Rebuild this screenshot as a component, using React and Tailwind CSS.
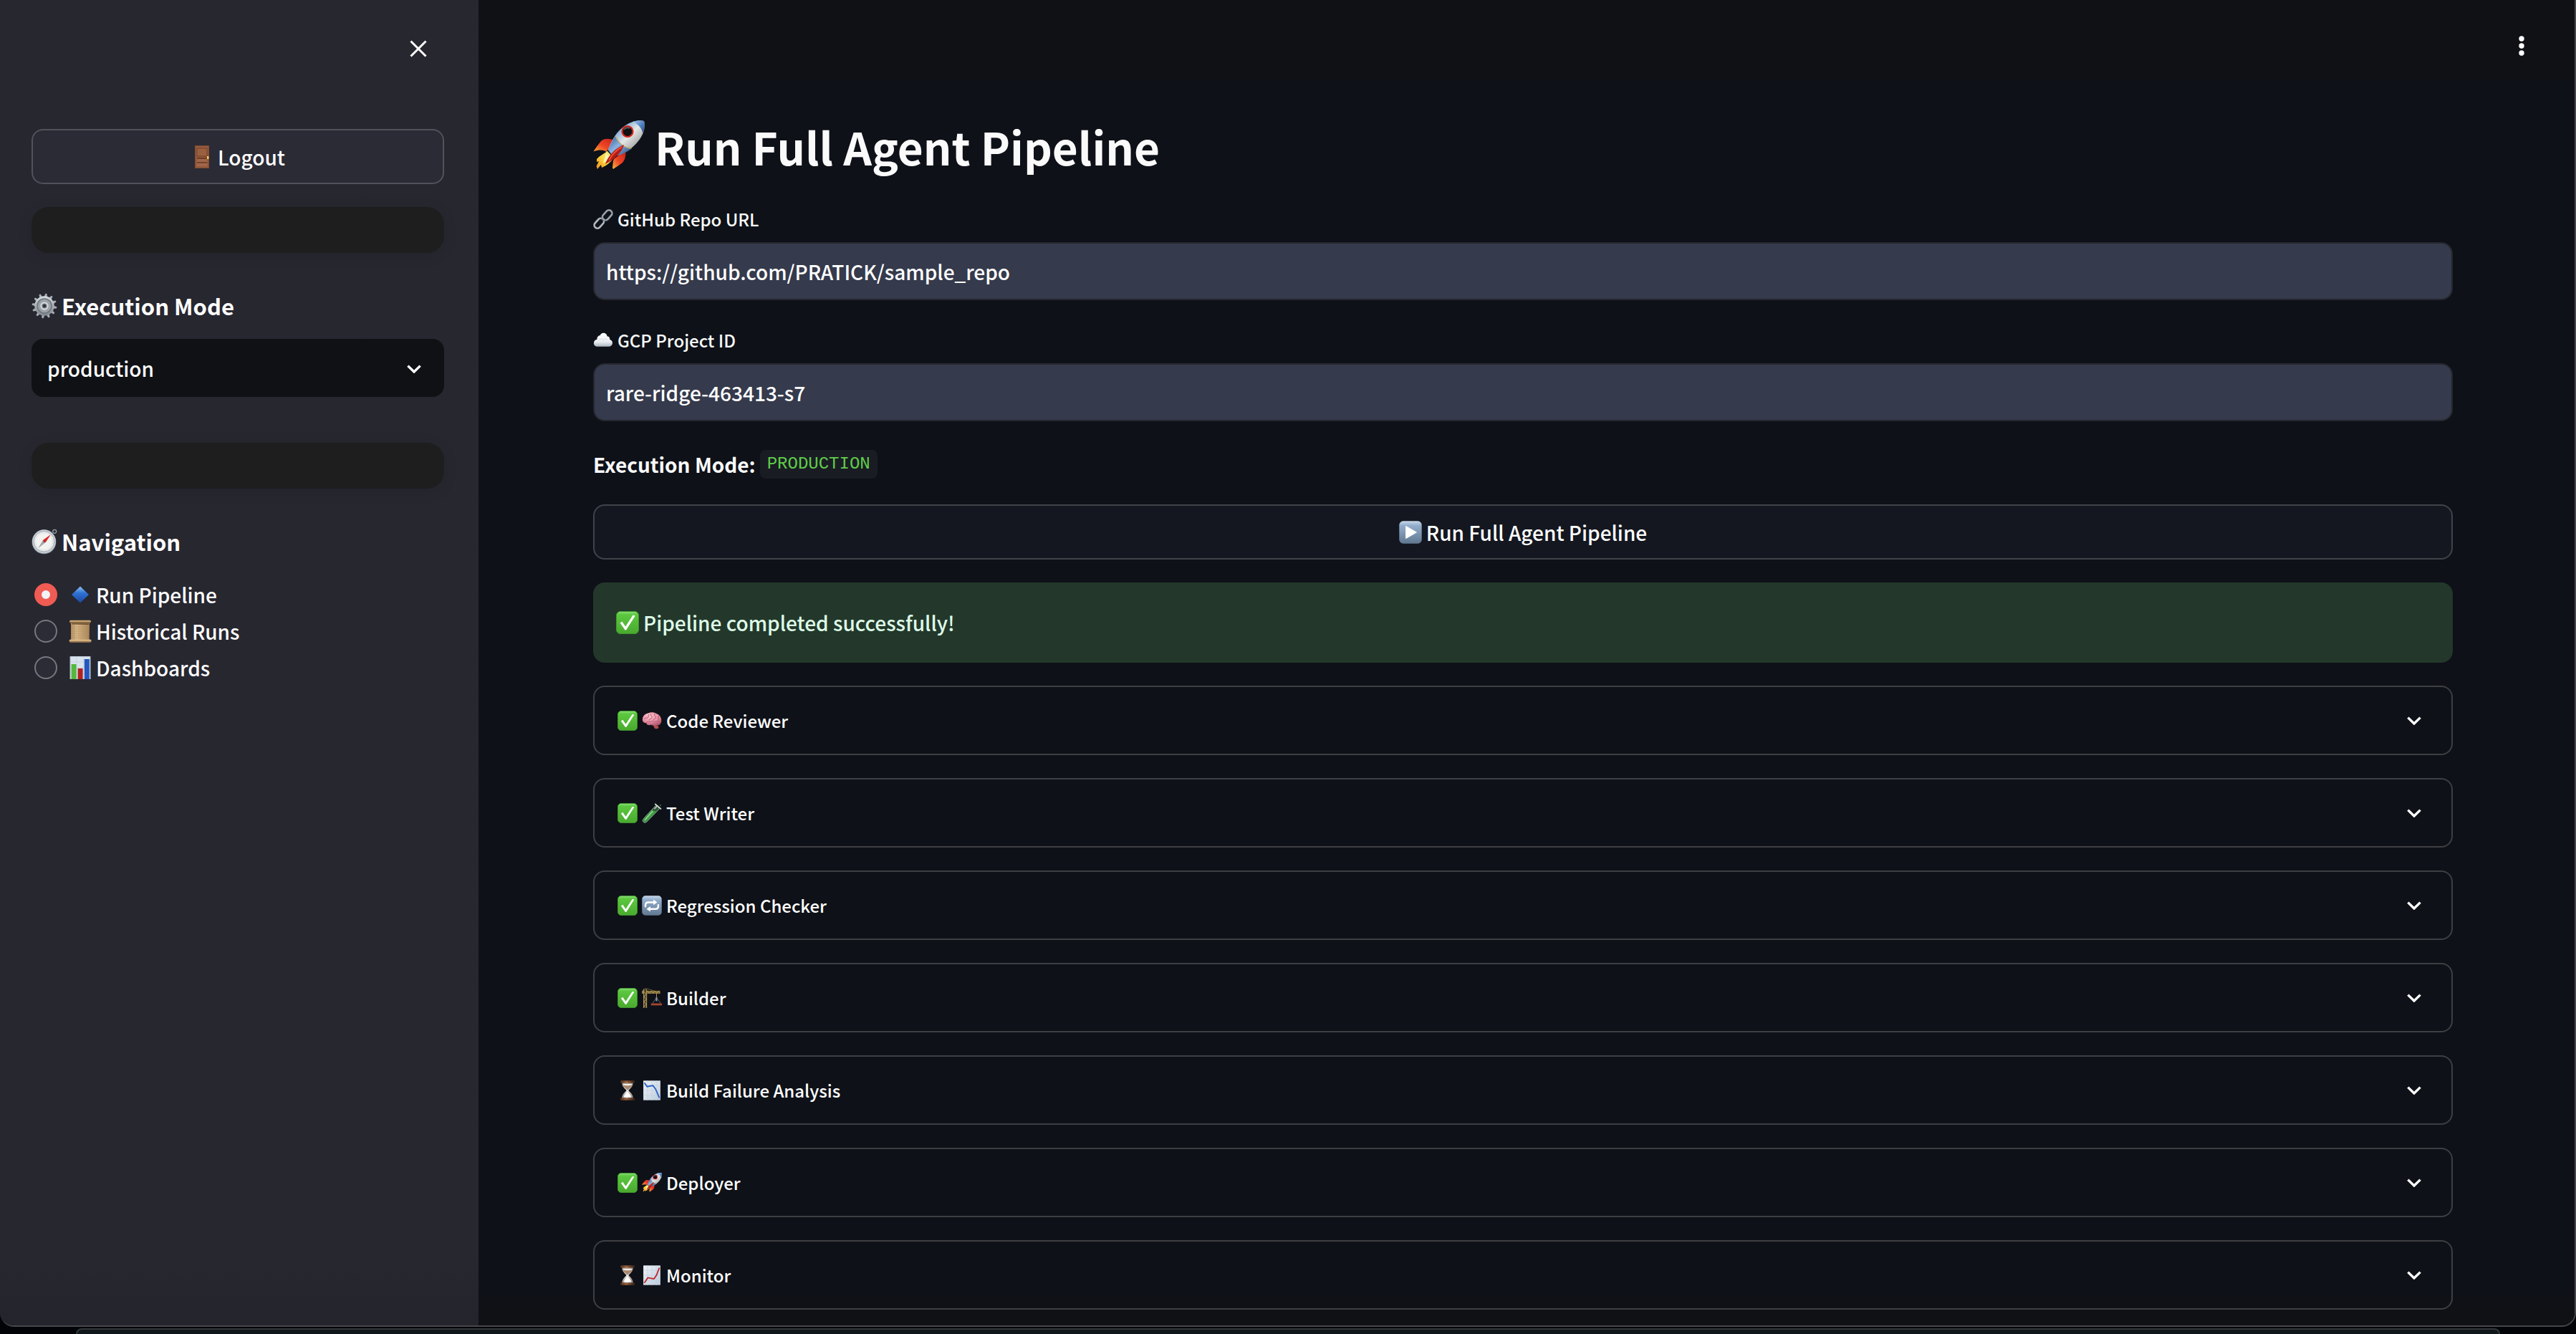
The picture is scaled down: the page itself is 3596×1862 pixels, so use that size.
import React, { useState } from "react";

/* ---------- emoji-style icons ---------- */

function Icon({ className, children, box = "0 0 32 32" }) {
  return (
    <svg viewBox={box} className={`shrink-0 ${className}`} aria-hidden="true">
      {children}
    </svg>
  );
}

function Gradients() {
  return (
    <svg className="absolute h-0 w-0" aria-hidden="true">
      <defs>
        <linearGradient id="gGreen" x1="0" y1="0" x2="0" y2="1">
          <stop offset="0" stopColor="#8fe07f" />
          <stop offset="0.14" stopColor="#5cc83f" />
          <stop offset="1" stopColor="#4aa92f" />
        </linearGradient>
        <linearGradient id="gBlueKey" x1="0" y1="0" x2="0" y2="1">
          <stop offset="0" stopColor="#c9d9ea" />
          <stop offset="0.2" stopColor="#93aecd" />
          <stop offset="1" stopColor="#60778f" />
        </linearGradient>
        <linearGradient id="gBody" x1="0" y1="0" x2="1" y2="1">
          <stop offset="0" stopColor="#3f71b4" />
          <stop offset="0.3" stopColor="#8fb2dd" />
          <stop offset="0.5" stopColor="#e4e7e6" />
          <stop offset="0.75" stopColor="#a3a7a6" />
          <stop offset="1" stopColor="#55595b" />
        </linearGradient>
        <linearGradient id="gBodyLow" x1="0" y1="0" x2="1" y2="1">
          <stop offset="0" stopColor="#2e558f" />
          <stop offset="0.45" stopColor="#8ab2e2" />
          <stop offset="1" stopColor="#234476" />
        </linearGradient>
        <linearGradient id="gFin" x1="1" y1="0" x2="0" y2="1">
          <stop offset="0" stopColor="#c41f17" />
          <stop offset="0.55" stopColor="#ee4526" />
          <stop offset="1" stopColor="#fbb43a" />
        </linearGradient>
        <linearGradient id="gFlame" x1="1" y1="0" x2="0" y2="1">
          <stop offset="0" stopColor="#fff39a" />
          <stop offset="0.55" stopColor="#fcd23c" />
          <stop offset="1" stopColor="#ee8a1f" />
        </linearGradient>
        <linearGradient id="gNose" x1="0" y1="0" x2="1" y2="1">
          <stop offset="0" stopColor="#a8c8ee" />
          <stop offset="0.5" stopColor="#5585c4" />
          <stop offset="1" stopColor="#274a80" />
        </linearGradient>
        <linearGradient id="gDiamond" x1="0" y1="0" x2="0" y2="1">
          <stop offset="0" stopColor="#8fc4f5" />
          <stop offset="0.4" stopColor="#2f72d4" />
          <stop offset="1" stopColor="#1d48a0" />
        </linearGradient>
        <linearGradient id="gPaper" x1="0" y1="0" x2="1" y2="1">
          <stop offset="0" stopColor="#eef3f8" />
          <stop offset="1" stopColor="#bccbdc" />
        </linearGradient>
        <linearGradient id="gScroll" x1="0" y1="0" x2="1" y2="0">
          <stop offset="0" stopColor="#b08a5e" />
          <stop offset="0.3" stopColor="#dab98a" />
          <stop offset="1" stopColor="#a98355" />
        </linearGradient>
        <linearGradient id="gMetal" x1="0" y1="0" x2="0" y2="1">
          <stop offset="0" stopColor="#d5dae0" />
          <stop offset="1" stopColor="#7f858c" />
        </linearGradient>
        <linearGradient id="gCloud" x1="0" y1="0" x2="0" y2="1">
          <stop offset="0" stopColor="#ffffff" />
          <stop offset="0.65" stopColor="#e9edf1" />
          <stop offset="1" stopColor="#aab4c0" />
        </linearGradient>
        <radialGradient id="gBrain" cx="0.4" cy="0.3" r="0.8">
          <stop offset="0" stopColor="#f9c0cd" />
          <stop offset="0.55" stopColor="#e58ea3" />
          <stop offset="1" stopColor="#a94d66" />
        </radialGradient>
        <linearGradient id="gWoodCap" x1="0" y1="0" x2="1" y2="0">
          <stop offset="0" stopColor="#4b2a18" />
          <stop offset="0.4" stopColor="#96603c" />
          <stop offset="1" stopColor="#3a2012" />
        </linearGradient>
        <linearGradient id="gGlass" x1="0" y1="0" x2="1" y2="0">
          <stop offset="0" stopColor="#8d8078" />
          <stop offset="0.45" stopColor="#f2efec" />
          <stop offset="1" stopColor="#8a7a70" />
        </linearGradient>
      </defs>
    </svg>
  );
}

const Door = ({ className }) => (
  <Icon className={className}>
    <rect x="6" y="0" width="20" height="32" fill="#7d4a31" />
    <rect x="7" y="1" width="18" height="30" fill="#935a3c" />
    <rect x="9" y="4" width="14" height="11" fill="#9a6040" stroke="#74432b" strokeWidth="1" />
    <rect x="9" y="17" width="14" height="2" fill="#6d3d28" />
    <rect x="9" y="19" width="14" height="4" fill="#a2664a" />
    <rect x="9" y="23" width="14" height="1.6" fill="#6d3d28" />
    <rect x="9" y="25" width="14" height="4" fill="#a2664a" />
    <rect x="23" y="15" width="2.4" height="4" fill="#f0cf4e" />
  </Icon>
);

const Gear = ({ className }) => (
  <Icon className={className}>
    <g fill="#a7afb6">
      {[0, 30, 60, 90, 120, 150, 180, 210, 240, 270, 300, 330].map((a) => (
        <path key={a} d="M14.2 4.5 L15 0.6 H17 L17.8 4.5 Z" transform={`rotate(${a + 8} 16 16)`} />
      ))}
    </g>
    <circle cx="16" cy="16" r="12.2" fill="url(#gMetal)" />
    <circle cx="16" cy="16" r="9.6" fill="#6f767d" />
    <circle cx="16" cy="16" r="8.2" fill="#9da3a9" />
    <circle cx="16" cy="16" r="5" fill="#d9dde2" />
    <circle cx="16" cy="16" r="3.2" fill="#6b7178" />
    <circle cx="16" cy="16" r="1.8" fill="#2b2b33" />
  </Icon>
);

const Compass = ({ className }) => (
  <Icon className={className}>
    <circle cx="28.6" cy="3.4" r="2.2" fill="none" stroke="#9aa3ad" strokeWidth="1.1" />
    <circle cx="15.5" cy="16.4" r="15" fill="#8a929b" />
    <circle cx="15.5" cy="15.8" r="14.6" fill="#c5ccd4" />
    <circle cx="15.5" cy="15.8" r="12.6" fill="#f3f3f2" stroke="#9aa1a9" strokeWidth="0.8" />
    <circle cx="15.5" cy="15.8" r="10.6" fill="none" stroke="#c3c3c3" strokeWidth="1.4" strokeDasharray="0.6 1.6" />
    <path d="M8.2 24.2 L14 14.2 L17.4 17.2 Z" fill="#a4a7ab" />
    <path d="M24 7 L14 14.2 L17.4 17.2 Z" fill="#d92a22" />
    <circle cx="15.7" cy="15.8" r="1" fill="#8b1a15" />
  </Icon>
);

const Diamond = ({ className }) => (
  <Icon className={className}>
    <path d="M16 4.5 L28 16 L16 27.5 L4 16 Z" fill="url(#gDiamond)" />
  </Icon>
);

const Scroll = ({ className }) => (
  <Icon className={className}>
    <path d="M3 4 H29 L28.6 28 H3 Z" fill="url(#gScroll)" />
    <path d="M3 4 H29 L28 7 L5 6.5 Z" fill="#6f5332" />
    <rect x="1" y="0.8" width="30" height="3.6" rx="1.6" fill="#c9a673" />
    <rect x="1" y="3" width="30" height="1.2" fill="#7c5e3a" />
    <g stroke="#b08d60" strokeWidth="0.9">
      <path d="M6 10H26M6 13H25M6 16H26M6 19H24M6 22H26M6 25H20" strokeDasharray="3 0.8 2 0.8" />
    </g>
    <rect x="0.6" y="27.6" width="31" height="4" rx="1.8" fill="#d3b080" />
    <rect x="1" y="30.2" width="30" height="1.2" fill="#8b6a42" />
  </Icon>
);

const BarChart = ({ className }) => (
  <Icon className={className}>
    <rect x="2" y="0" width="28" height="32" fill="#d9e3ee" stroke="#a9b6c5" strokeWidth="1" />
    <path d="M2 8H30M2 16H30M2 24H30M11 0V32M20.5 0V32" stroke="#c2cfdd" strokeWidth="0.8" />
    <rect x="3.6" y="11" width="7" height="21" fill="#55b83a" />
    <rect x="12.6" y="17" width="7" height="15" fill="#b02121" />
    <rect x="21.8" y="4" width="7" height="28" fill="#2457bf" />
  </Icon>
);

const Rocket = ({ className }) => (
  <Icon className={className} box="0 0 72 72">
    <path d="M34 30 C24 24 14 25 11 29 C6 35 2 41 0.5 43.5 C9 40.5 15 41 20 45 Z" fill="url(#gFin)" />
    <path d="M27 66 C28 61 27 56 30 53 L45 42 C46 48 45 55 41 59 C36 63 31 66 28 68 Z" fill="url(#gFin)" />
    <path d="M20 43 L29 52 C25 58 18 64 12 66 L11 62 L6 68 L4.5 64 L8 57 L5 58 L5 54 L8 51 Z" fill="url(#gFlame)" />
    <path d="M18 46 L25 53 L14 60 Z" fill="#fff6b5" />
    <path d="M19 42 L23 39 L31 46 L28 52 Z" fill="#23272e" />
    <path d="M21 41 C26 27 33 15 45 7 C54 1 64 -1 71 1 C73 9 71 19 63 29 C55 39 43 48 28 50 Z" fill="url(#gBody)" />
    <path d="M21 41 C24 34 27 28 31 22 C36 32 42 38 53 40 C46 45 38 49 28 50 Z" fill="url(#gBodyLow)" />
    <path d="M55 2 C61 0 67 0 71 1 C73 6 71.5 13 69.5 18 C68 11 63 5 55 2 Z" fill="url(#gNose)" />
    <path d="M31 22 C36 32 42 38 54 39" fill="none" stroke="#c4a84d" strokeWidth="1.1" />
    <circle cx="48" cy="15.5" r="8.6" fill="#d8261d" />
    <circle cx="48" cy="15.5" r="6.4" fill="#0f1114" />
    <path d="M43.5 13 A5.4 5.4 0 0 1 51 11" fill="none" stroke="#6d7378" strokeWidth="1.4" />
    <path d="M17 61 C20 51 30 39 43 34 C40 45 30 54 17 61 Z" fill="#b81a14" />
    <path d="M22 56 C25 49 33 41 40 37" fill="none" stroke="#f0543a" strokeWidth="1.6" />
  </Icon>
);

const Link = ({ className }) => (
  <Icon className={className}>
    <g fill="none" strokeLinecap="round">
      <rect x="-5" y="-9" width="10" height="18" rx="5" transform="translate(9.5 22.5) rotate(42)" stroke="#6d737b" strokeWidth="3.6" />
      <rect x="-5" y="-9" width="10" height="18" rx="5" transform="translate(9.5 22.5) rotate(42)" stroke="#c6ccd3" strokeWidth="1.8" />
      <rect x="-5" y="-9" width="10" height="18" rx="5" transform="translate(22.5 9.5) rotate(42)" stroke="#5a616a" strokeWidth="3.6" />
      <rect x="-5" y="-9" width="10" height="18" rx="5" transform="translate(22.5 9.5) rotate(42)" stroke="#aab2bb" strokeWidth="1.8" />
    </g>
  </Icon>
);

const Cloud = ({ className }) => (
  <Icon className={className}>
    <path
      d="M7 26 C2.6 26 0.6 22.8 1.2 19.4 C1.6 16.6 3.8 14.8 6.2 14.6 C6 10.6 8.6 8.4 11 8.4 C12 5.2 15 3.8 17.6 4.4 C20.6 5 22.2 7.4 22.2 9.4 C25.4 9.6 27 12.2 26.6 14.8 C29.6 15.4 31.2 18 30.8 20.8 C30.4 24 28 26 25 26 Z"
      fill="url(#gCloud)"
    />
    <path d="M9 15.5 C12 13 14 13.5 16 15.5 C18 13.4 20 13.2 22 14.5" fill="none" stroke="#d2d8de" strokeWidth="1" />
  </Icon>
);

const Play = ({ className }) => (
  <Icon className={className}>
    <rect x="0.3" y="0.3" width="31.4" height="31.4" rx="5.5" fill="url(#gBlueKey)" />
    <path d="M9.6 7.4 L24.4 16 L9.6 24.6 Z" fill="#fff" stroke="#fff" strokeWidth="1" strokeLinejoin="round" />
  </Icon>
);

const Check = ({ className }) => (
  <Icon className={className}>
    <rect x="0.5" y="0.5" width="31" height="31" rx="5.5" fill="url(#gGreen)" stroke="#3f9a2a" strokeWidth="1" />
    <path d="M5.6 16.6 L8.4 14.6 L13.2 21.4 L23.6 5.6 L26.8 6.4 L14 26.4 H12.6 Z" fill="#fff" />
  </Icon>
);

const Brain = ({ className }) => (
  <Icon className={className}>
    <path d="M20 23 C24 23 27.5 24 26.6 27 C25.6 29.4 22 29.6 20 27.6 L17.6 22 Z" fill="#b14a4f" />
    <path
      d="M1 14 C1 8 6 4.4 10 4 C14 2 20 2.4 23 4.6 C28 6 31.4 10.6 31.2 15.6 C31.4 20 28.6 23.4 24.6 23.4 C20.6 24.4 17 23.6 14.6 22.6 C10.6 24 7.6 22.4 7 19.6 C3.4 19.8 0.8 17.6 1 14 Z"
      fill="url(#gBrain)"
    />
    <g fill="none" stroke="#b3586f" strokeWidth="1.1" strokeLinecap="round">
      <path d="M4 13 C6 10 8 13 10 10.5 C11.4 8.6 9.6 7.4 11 6" />
      <path d="M14 5 C13 8 17 8 16 11 C15.4 13.4 12 12.6 11.6 15" />
      <path d="M20 5 C19 8 23 8.6 22 11.4 C21 13.6 18.4 12.8 18 15" />
      <path d="M26.6 8.6 C24.6 11 28 13 26 15.4" />
      <path d="M7 19 C9 16.6 12 18.8 14.4 17.4 C17 15.6 19.6 18.6 22.6 17 C25 15.8 26.6 18 29 17" />
      <path d="M14 22 C15.6 20 19 21.8 21 20.4 C23 19.4 24.6 21 26.6 20.6" />
    </g>
    <path d="M6 8.6 C8 6 11 5 13 4.8" stroke="#fcd9e0" strokeWidth="1" fill="none" />
  </Icon>
);

const TestTube = ({ className }) => (
  <Icon className={className}>
    <path d="M22.6 3.4 L28.6 8.4 L8 29.6 C6 31.6 3 31.4 2 29.6 C0.8 27.8 1.6 26 3 24.4 Z" fill="#2f5a38" stroke="#9db3a3" strokeWidth="1.1" />
    <path d="M15.6 11.8 L23.4 13.4 L7.4 28.8 C5.6 30.4 3.6 30.2 2.8 28.8 C2.2 27.6 2.8 26.2 3.8 25.2 Z" fill="#3f9f45" />
    <path d="M17 13 L5 26.6" stroke="#8be08a" strokeWidth="1.8" strokeLinecap="round" />
    <path d="M21.4 1.6 L30.2 9" stroke="#d9dedc" strokeWidth="2" strokeLinecap="round" />
    <path d="M24 5 L20 9.4" stroke="#e9efec" strokeWidth="1.2" />
    <circle cx="29.6" cy="3.4" r="1.3" fill="#2e6b36" />
  </Icon>
);

const Repeat = ({ className }) => (
  <Icon className={className}>
    <rect x="0.3" y="0.3" width="31.4" height="31.4" rx="5.5" fill="url(#gBlueKey)" />
    <g fill="none" stroke="#fff" strokeWidth="2.8" strokeLinecap="round">
      <path d="M5.8 17.4 V15.4 C5.8 12.6 7.6 10.8 10.4 10.8 H20" />
      <path d="M26.2 15 V16.8 C26.2 19.6 24.4 21.4 21.6 21.4 H12" />
    </g>
    <path d="M18.4 6.4 L24.6 10.8 L18.4 15.2 Z M13.6 17 L7.4 21.4 L13.6 25.8 Z" fill="#fff" />
  </Icon>
);

const Crane = ({ className }) => (
  <Icon className={className}>
    <path d="M6 0.6 L0.6 4.4 M6 0.6 L20 4.6" stroke="#8c7a4a" strokeWidth="0.8" fill="none" />
    <rect x="0" y="4.6" width="29" height="4.2" fill="#6b5a34" />
    <path d="M0 8.4 L3 5 L6 8.4 L9 5 L12 8.4 L15 5 L18 8.4 L21 5 L24 8.4 L27 5 L29 8.4" stroke="#cfae5c" strokeWidth="1.1" fill="none" />
    <path d="M0 5H29M0 8.6H29" stroke="#a88d4a" strokeWidth="0.8" />
    <rect x="2.6" y="1" width="5.2" height="31" fill="#4b402a" />
    <path d="M3 32V2M7.6 32V2M3 30L7.6 26L3 22L7.6 18L3 14L7.6 10L3 6" stroke="#c2a55c" strokeWidth="1.1" fill="none" />
    <path d="M23.4 9V18" stroke="#b5a673" strokeWidth="1" />
    <path d="M23.4 15.5L17 24.4M23.4 15.5L30 24.4" stroke="#6f7884" strokeWidth="0.9" />
    <rect x="22.2" y="15" width="2.4" height="6" fill="#8d96a1" />
    <rect x="14.6" y="24.6" width="17.4" height="3.2" fill="#a5452f" />
  </Icon>
);

const Hourglass = ({ className }) => (
  <Icon className={className}>
    <path d="M7 3.6 H25 C25 10 20 13 17.6 16 C20 19 25 22 25 28.4 H7 C7 22 12 19 14.4 16 C12 13 7 10 7 3.6 Z" fill="url(#gGlass)" />
    <path d="M8.6 6 C12 4.6 20 4.6 23.4 6 C22.4 10 19 12.6 16 15.4 C13 12.6 9.6 10 8.6 6 Z" fill="#a8866c" />
    <path d="M10 26.6 C11 23 14 21 16 18.6 C18 21 21 23 22 26.6 Z" fill="#ffffff" />
    <path d="M9 7 C12 8.6 20 8.6 23 7 L23.4 5.6 H8.6 Z" fill="#f0ece8" />
    <rect x="4.4" y="0.4" width="23.2" height="3.6" rx="1.6" fill="url(#gWoodCap)" />
    <rect x="4.4" y="28" width="23.2" height="3.6" rx="1.6" fill="url(#gWoodCap)" />
  </Icon>
);

const ChartDown = ({ className }) => (
  <Icon className={className}>
    <rect x="2.4" y="0.4" width="27.2" height="31.2" fill="url(#gPaper)" />
    <path d="M2.4 8H29.6M2.4 16H29.6M2.4 24H29.6M9 0V32M16 0V32M23 0V32" stroke="#c3cfdc" strokeWidth="0.7" />
    <path d="M4 3.6 L8.4 10 L17.6 8.2 L22 14 L28 28" fill="none" stroke="#2b5fc4" strokeWidth="2.1" strokeLinejoin="round" />
  </Icon>
);

const ChartUp = ({ className }) => (
  <Icon className={className}>
    <rect x="2.4" y="0.4" width="27.2" height="31.2" fill="url(#gPaper)" />
    <path d="M2.4 8H29.6M2.4 16H29.6M2.4 24H29.6M9 0V32M16 0V32M23 0V32" stroke="#c3cfdc" strokeWidth="0.7" />
    <path d="M4 28.4 L9.6 19.8 L19.4 21.8 L23.4 15.8 L28 4" fill="none" stroke="#c0282d" strokeWidth="2.1" strokeLinejoin="round" />
  </Icon>
);

const Chevron = ({ className }) => (
  <svg viewBox="0 0 20 12" className={className} aria-hidden="true">
    <path d="M1.4 1.6 L10 10 L18.6 1.6" fill="none" stroke="#fff" strokeWidth="3.4" />
  </svg>
);

/* ---------- data ---------- */

const NAV = [
  { id: "run", label: "Run Pipeline", icon: Diamond },
  { id: "history", label: "Historical Runs", icon: Scroll },
  { id: "dash", label: "Dashboards", icon: BarChart },
];

const STAGES = [
  { label: "Code Reviewer", status: Check, icon: Brain },
  { label: "Test Writer", status: Check, icon: TestTube },
  { label: "Regression Checker", status: Check, icon: Repeat },
  { label: "Builder", status: Check, icon: Crane },
  { label: "Build Failure Analysis", status: Hourglass, icon: ChartDown },
  { label: "Deployer", status: Check, icon: Rocket },
  { label: "Monitor", status: Hourglass, icon: ChartUp },
];

/* ---------- parts ---------- */

function SidebarHeading({ icon: I, children }) {
  return (
    <h3 className="mt-[50px] flex items-center gap-1.5 text-[31px] leading-[48px] font-bold">
      <I className="size-9" />
      {children}
    </h3>
  );
}

function Sidebar() {
  const [page, setPage] = useState("run");
  return (
    <aside className="flex w-[668px] shrink-0 flex-col bg-gradient-to-b from-[#272730] from-95% to-[#24242c] pr-12 pl-11 text-white">
      <div className="flex h-[180px] items-start justify-end pt-12 pr-4">
        <button type="button" aria-label="Close sidebar" className="flex size-10 items-center justify-center">
          <svg viewBox="0 0 24 24" className="size-6" aria-hidden="true">
            <path d="M1.5 1.5 L22.5 22.5 M22.5 1.5 L1.5 22.5" stroke="#fff" strokeWidth="3" />
          </svg>
        </button>
      </div>

      <button
        type="button"
        className="flex h-[77px] items-center justify-center gap-1.5 rounded-2xl border-2 border-[#52525b] bg-[#2b2b35] text-[28px] font-medium"
      >
        <Door className="size-8" />
        Logout
      </button>

      <div className="mt-8 h-16 rounded-3xl bg-[#1e1e1e] shadow-[0_4px_20px_rgba(0,0,0,0.1)]" />

      <SidebarHeading icon={Gear}>Execution Mode</SidebarHeading>
      <div className="relative mt-[22px]">
        <select
          aria-label="Execution Mode"
          defaultValue="production"
          className="h-[81px] w-full appearance-none rounded-2xl bg-[#101115] pl-[22px] text-[28px] font-medium"
        >
          <option value="production">production</option>
        </select>
        <Chevron className="pointer-events-none absolute top-9 right-8 h-3 w-5" />
      </div>

      <div className="mt-16 h-16 rounded-3xl bg-[#1e1e1e] shadow-[0_4px_20px_rgba(0,0,0,0.1)]" />

      <SidebarHeading icon={Compass}>Navigation</SidebarHeading>
      <div role="radiogroup" aria-label="Navigation" className="mt-6 flex flex-col pl-1">
        {NAV.map(({ id, label, icon: I }) => (
          <label key={id} className="flex h-[51px] items-center text-[28px] font-medium">
            <input
              type="radio"
              name="page"
              checked={page === id}
              onChange={() => setPage(id)}
              className="size-8 appearance-none rounded-full border-2 border-[#77777e] bg-[#2c2c37] checked:border-[10px] checked:border-[#f05b53] checked:bg-[#f0f2f6]"
            />
            <I className="mr-1.5 ml-4 size-8" />
            {label}
          </label>
        ))}
      </div>
    </aside>
  );
}

function Field({ id, icon: I, label, value }) {
  return (
    <div className="mb-10 flex flex-col gap-4">
      <label htmlFor={id} className="flex items-center gap-1.5 text-[24px] leading-8 font-medium">
        <I className="size-7" />
        {label}
      </label>
      <input
        id={id}
        type="text"
        defaultValue={value}
        className="h-[81px] w-full rounded-2xl border-2 border-[#26272f] bg-[#353a4c] px-4 text-[28px] font-medium text-white"
      />
    </div>
  );
}

function Stage({ status: S, icon: I, label }) {
  return (
    <details className="rounded-2xl border-2 border-[#3e3f43]">
      <summary className="flex h-[93px] list-none items-center pr-[42px] pl-8 text-[24px] font-medium text-white">
        <S className="mr-1.5 size-7" />
        <I className="mr-1.5 size-7" />
        {label}
        <Chevron className="ml-auto h-3 w-5" />
      </summary>
    </details>
  );
}

function Main() {
  return (
    <main className="flex min-w-0 flex-1 flex-col bg-[#0e1118] text-[#fafafa]">
      <header className="flex h-28 shrink-0 items-start justify-end bg-[#101115] pt-11 pr-[54px]">
        <button type="button" aria-label="Menu" className="flex size-10 items-center justify-center">
          <svg viewBox="0 0 8 28" className="h-7 w-2" aria-hidden="true">
            <circle cx="4" cy="4" r="3.7" fill="#fff" />
            <circle cx="4" cy="14" r="3.7" fill="#fff" />
            <circle cx="4" cy="24" r="3.7" fill="#fff" />
          </svg>
        </button>
      </header>

      <div className="flex flex-1 flex-col bg-gradient-to-b from-transparent from-97% to-[#101113] pt-12 pr-[170px] pl-40">
        <h1 className="mb-[42px] flex items-center gap-3.5 text-[62px] leading-[88px] font-semibold">
          <Rocket className="size-[72px]" />
          Run Full Agent Pipeline
        </h1>

        <Field id="repo" icon={Link} label="GitHub Repo URL" value="https://github.com/PRATICK/sample_repo" />
        <Field id="project" icon={Cloud} label="GCP Project ID" value="rare-ridge-463413-s7" />

        <p className="flex h-10 items-center gap-1.5 text-[28px] leading-9 font-bold">
          Execution Mode:
          <code className="rounded-lg bg-[#1a1c24] px-2.5 font-['Liberation_Mono',monospace] text-[24px] leading-10 font-normal text-[#5fce49]">
            PRODUCTION
          </code>
        </p>

        <div className="mt-9 flex flex-col gap-8">
          <button
            type="button"
            className="flex h-[77px] items-center justify-center gap-1.5 rounded-2xl border-2 border-[#41434b] bg-[#14171f] text-[28px] font-medium text-white"
          >
            <Play className="size-8" />
            Run Full Agent Pipeline
          </button>

          <div
            role="status"
            className="flex h-28 items-center gap-1.5 rounded-2xl bg-[#23382b] px-8 text-[28px] font-medium text-[#dffde9]"
          >
            <Check className="size-8" />
            Pipeline completed successfully!
          </div>

          {STAGES.map((s) => (
            <Stage key={s.label} {...s} />
          ))}
        </div>
      </div>
    </main>
  );
}

export default function App() {
  return (
    <div className="flex h-screen flex-col overflow-hidden bg-[#020408] font-['Noto_Sans_CJK_SC','Open_Sans',sans-serif]">
      <Gradients />
      <div className="flex min-h-0 flex-1 overflow-hidden rounded-b-[20px] border-r-2 border-b-2 border-[#46464b]">
        <Sidebar />
        <Main />
      </div>
      <div className="mx-[106px] mt-0.5 h-2 shrink-0 rounded-t-[24px] border-2 border-b-0 border-[#33373a] bg-[#10171a]" />
    </div>
  );
}
